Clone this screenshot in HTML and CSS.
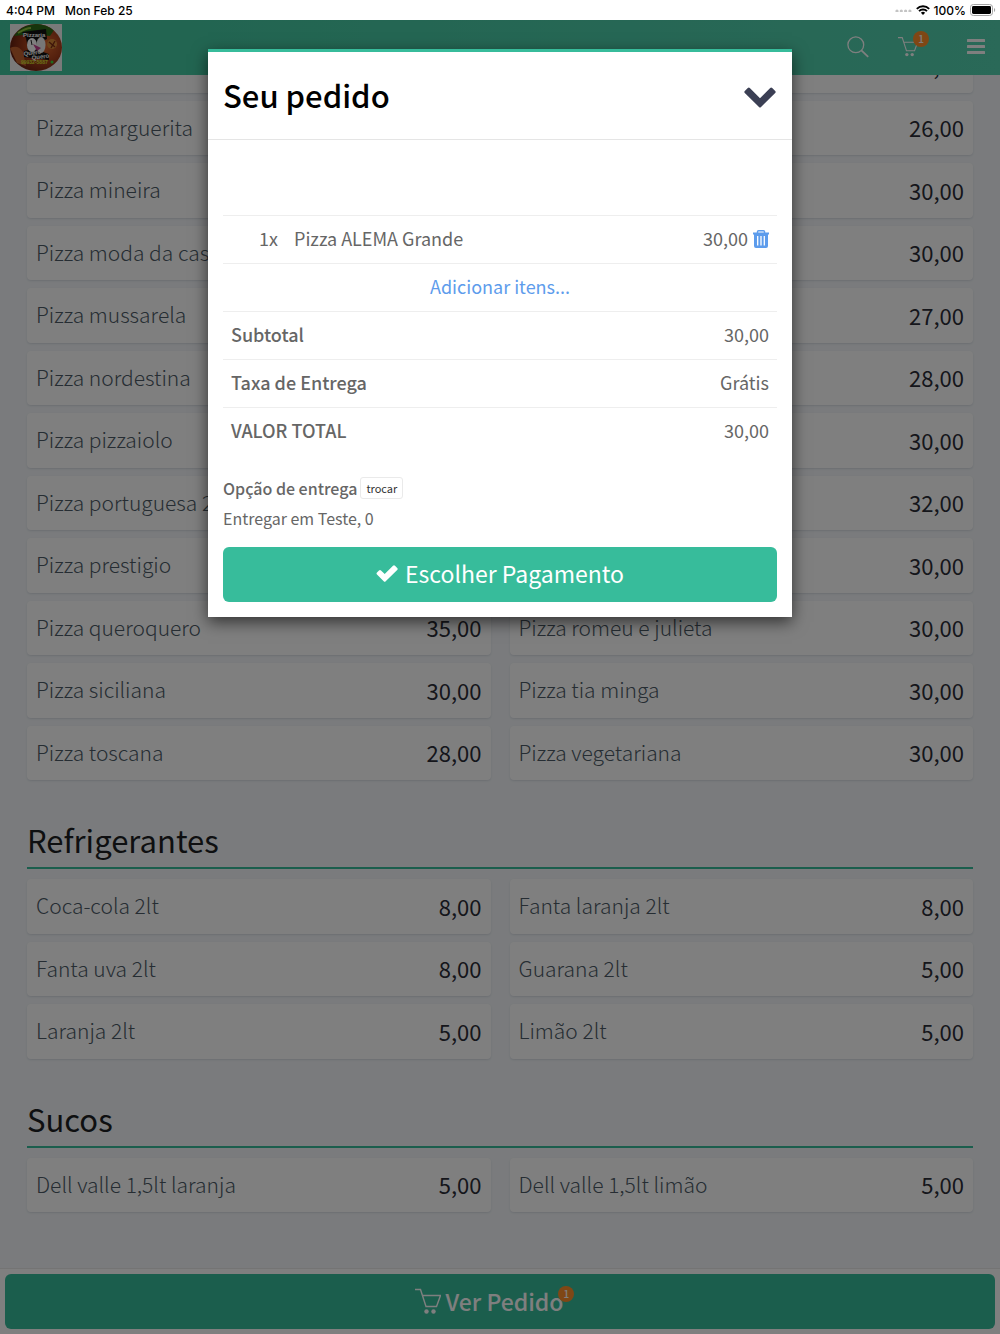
FILE: index.html
```
<!DOCTYPE html>
<html lang="pt-BR">
  <head>
    <meta charset="UTF-8" />
    <meta name="viewport" content="width=device-width, initial-scale=1.0" />
    <title>Pizzaria Quero Quero</title>
    <link rel="stylesheet" href="styles.css">
  </head>
  <body>
    <!-- icons -->
    <svg class="sprite" aria-hidden="true">
      <symbol id="cart" viewBox="0 0 26 26">
        <path d="M0 1.500h5.500l5.500 17h10.500l4-11H7.500" fill="none" stroke="currentColor" stroke-width="1.4" />
        <circle cx="11.500" cy="23.500" r="2.200" fill="currentColor" />
        <circle cx="18.500" cy="23.500" r="2.200" fill="currentColor" />
      </symbol>
    </svg>

    <div class="status-bar">
      <span class="status-group"><span>4:04 PM</span><span>Mon Feb 25</span></span>
      <span class="status-right">
        <svg width="17" height="4" viewBox="0 0 17 4" fill="#c4c4c4"><circle cx="2" cy="3" r="1.6" /><circle cx="6.3" cy="3" r="1.6" /><circle cx="10.6" cy="3" r="1.6" /><circle cx="14.9" cy="3" r="1.6" /></svg>
        <svg width="14" height="10" viewBox="0 0 14 10" fill="none" stroke="#000" stroke-width="1.9"><path d="M.8 3.8a8.8 8.8 0 0 1 12.4 0M3 6.2a5.6 5.6 0 0 1 8 0" /><path d="M7 10 4.900 7.800a3 3 0 0 1 4.200 0z" fill="#000" stroke="none" /></svg>
        <span>100%</span>
        <svg width="26" height="12" viewBox="0 0 26 12"><rect x=".5" y=".5" width="22" height="11" rx="2.8" fill="none" stroke="#a5a5a5" /><rect x="2" y="2" width="19" height="8" rx="1.4" /><path d="M24 4v4c1.600-.6 1.600-3.400 0-4z" fill="#a5a5a5" /></svg>
      </span>
    </div>

    <div class="app">
      <header class="topbar">
        <a class="logo" href="#" aria-label="Pizzaria Quero Quero">
          <svg width="52" height="47" viewBox="0 0 52 47">
            <defs>
              <radialGradient id="pizza" cx=".65" cy=".45" r=".7">
                <stop offset="0" stop-color="#e06a30" />
                <stop offset=".5" stop-color="#a8401c" />
                <stop offset="1" stop-color="#5c1a0c" />
              </radialGradient>
              <clipPath id="oval"><ellipse cx="26" cy="23.5" rx="26" ry="23.5" /></clipPath>
            </defs>
            <rect width="52" height="47" fill="#f4f4f4" />
            <g clip-path="url(#oval)">
              <rect width="52" height="47" fill="url(#pizza)" />
              <path d="M4 12Q12 0 28 0h20l-8 12-18-2z" fill="#2d6b16" />
              <path d="M8 9q8-5 13-5" stroke="#8fc23a" stroke-width="2" fill="none" />
              <path d="M0 24q8-4 13 4l3 14-9-3z" fill="#c2622f" />
              <path d="M12 8l24-3 1 10-4 2v11l6 2v6l-25-3v-6l4-1-2-12z" fill="#111" />
              <circle cx="42" cy="20" r="5" fill="#d98936" />
              <path d="M39 18l6 5M41 24l4-7" stroke="#7c2b13" stroke-width="1.4" />
              <ellipse cx="22" cy="21" rx="5" ry="7" fill="#fff" />
              <ellipse cx="31" cy="21" rx="4.500" ry="8" fill="#eee" />
              <path d="M21 16l1 5" stroke="#222" fill="none" />
              <path d="M23 20l8 4-4 3z" fill="#c33f8e" />
            </g>
            <g font-family="Liberation Sans, sans-serif" font-weight="bold">
              <text x="13" y="13" font-size="6" fill="#fff">Pizzaria</text>
              <text x="14" y="32" font-size="6" fill="#fff" transform="rotate(-8 14 32)">Quero</text>
              <text x="22" y="36" font-size="6" fill="#fff" transform="rotate(-8 22 36)">Quero</text>
              <text x="11" y="40" font-size="5" fill="#d4e02c">99932-5887</text>
            </g>
            <circle cx="42" cy="38" r="1.5" fill="#3fd43b" />
          </svg>
        </a>
        <nav class="topbar-actions">
          <button class="icon-button" aria-label="Buscar">
            <svg width="22" height="22" viewBox="0 0 22 22" fill="none" stroke="currentColor" stroke-width="1.3"><circle cx="8.8" cy="8.8" r="7.9" /><path d="M14.4 14.4l6.8 6.4" stroke-width="1.8" /></svg>
          </button>
          <button class="icon-button cart-button" aria-label="Carrinho">
            <svg width="20" height="21"><use href="#cart" /></svg>
            <span class="badge">1</span>
          </button>
          <button class="icon-button" aria-label="Menu">
            <svg width="18" height="16" viewBox="0 0 18 16" fill="currentColor"><rect y="0" width="18" height="3" rx=".5" /><rect y="6" width="18" height="3" rx=".5" /><rect y="12" width="18" height="3" rx=".5" /></svg>
          </button>
        </nav>
      </header>

      <main class="menu">
        <section class="products">
          <div class="product"><span></span></div>
          <div class="product"><span></span><b>30,00</b></div>
          <div class="product"><span>Pizza marguerita</span></div>
          <div class="product"><span></span><b>26,00</b></div>
          <div class="product"><span>Pizza mineira</span></div>
          <div class="product"><span></span><b>30,00</b></div>
          <div class="product"><span>Pizza moda da casa</span></div>
          <div class="product"><span></span><b>30,00</b></div>
          <div class="product"><span>Pizza mussarela</span></div>
          <div class="product"><span></span><b>27,00</b></div>
          <div class="product"><span>Pizza nordestina</span></div>
          <div class="product"><span></span><b>28,00</b></div>
          <div class="product"><span>Pizza pizzaiolo</span></div>
          <div class="product"><span></span><b>30,00</b></div>
          <div class="product"><span>Pizza portuguesa 2</span></div>
          <div class="product"><span></span><b>32,00</b></div>
          <div class="product"><span>Pizza prestigio</span></div>
          <div class="product"><span></span><b>30,00</b></div>
          <div class="product"><span>Pizza queroquero</span><b>35,00</b></div>
          <div class="product"><span>Pizza romeu e julieta</span><b>30,00</b></div>
          <div class="product"><span>Pizza siciliana</span><b>30,00</b></div>
          <div class="product"><span>Pizza tia minga</span><b>30,00</b></div>
          <div class="product"><span>Pizza toscana</span><b>28,00</b></div>
          <div class="product"><span>Pizza vegetariana</span><b>30,00</b></div>
        </section>

        <h2 class="category">Refrigerantes</h2>
        <section class="products">
          <div class="product"><span>Coca-cola 2lt</span><b>8,00</b></div>
          <div class="product"><span>Fanta laranja 2lt</span><b>8,00</b></div>
          <div class="product"><span>Fanta uva 2lt</span><b>8,00</b></div>
          <div class="product"><span>Guarana 2lt</span><b>5,00</b></div>
          <div class="product"><span>Laranja 2lt</span><b>5,00</b></div>
          <div class="product"><span>Limão 2lt</span><b>5,00</b></div>
        </section>

        <h2 class="category">Sucos</h2>
        <section class="products">
          <div class="product"><span>Dell valle 1,5lt laranja</span><b>5,00</b></div>
          <div class="product"><span>Dell valle 1,5lt limão</span><b>5,00</b></div>
        </section>
      </main>

      <footer class="bottom-bar">
        <button class="btn btn-order">
          <svg width="26" height="26"><use href="#cart" /></svg>
          <span class="btn-label">Ver Pedido<span class="badge">1</span></span>
        </button>
      </footer>

      <!-- modal do pedido -->
      <div class="overlay">
        <div class="modal" role="dialog" aria-labelledby="modal-title">
          <div class="modal-header">
            <h1 class="modal-title" id="modal-title">Seu pedido</h1>
            <button class="close-button" aria-label="Fechar">
              <svg width="32" height="21" viewBox="0 0 32 21" fill="#3b3f54"><path d="M16 11.2 26.2 1q1-1 2 0l3 3q1 1 0 2L17 20q-1 1-2 0L.8 6q-1-1 0-2l3-3q1-1 2 0z" /></svg>
            </button>
          </div>
          <div class="modal-body">
            <table class="order">
              <tr>
                <td class="qty">1x</td>
                <td>Pizza ALEMA Grande</td>
                <td class="value">
                  <span class="value-row">30,00
                    <button class="trash" aria-label="Remover">
                      <svg width="16" height="18" viewBox="0 0 16 18"><path d="M4.500 3V1.800q0-1 1-1h5q1 0 1 1V3" fill="none" stroke="currentColor" stroke-width="1.5" /><path d="M0 2.600h16v1.800h-1V16q0 2-2 2H3q-2 0-2-2V4.400H0z" fill="currentColor" /><path d="M4.700 6v9.500M8 6v9.500M11.300 6v9.500" stroke="#fff" stroke-width="1.3" /></svg>
                    </button>
                  </span>
                </td>
              </tr>
              <tr>
                <td colspan="3" class="add"><a href="#">Adicionar itens...</a></td>
              </tr>
              <tr>
                <th colspan="2" scope="row">Subtotal</th>
                <td class="value">30,00</td>
              </tr>
              <tr>
                <th colspan="2" scope="row">Taxa de Entrega</th>
                <td class="value">Grátis</td>
              </tr>
              <tr>
                <th colspan="2" scope="row">VALOR TOTAL</th>
                <td class="value">30,00</td>
              </tr>
            </table>
            <div class="delivery">
              <div class="delivery-title"><strong>Opção de entrega</strong><button class="btn-small">trocar</button></div>
              <div>Entregar em Teste, 0</div>
            </div>
            <button class="btn">
              <svg width="22" height="17" viewBox="0 0 22 17" fill="currentColor"><path d="M1 7.400 3 5.400q1-1 2 0l3.700 3.500L17 .8q1-1 2 0l2.200 2.100q1 1 0 2L9.700 16.200q-1 1-2 0L1 9.400q-1-1 0-2z" /></svg>
              <span>Escolher Pagamento</span>
            </button>
          </div>
        </div>
      </div>
    </div>
  </body>
</html>
```
FILE: styles.css
```
* {
  box-sizing: border-box;
}

body {
  margin: 0;
  height: 100vh;
  display: flex;
  flex-direction: column;
  overflow: hidden;
  font-family: "Noto Sans CJK SC", "Open Sans", sans-serif;
  color: #666;
}

button {
  font-family: inherit;
  border: none;
  background: none;
  padding: 0;
  cursor: pointer;
}

svg {
  display: block;
  flex: none;
}

.sprite {
  position: absolute;
  width: 0;
  height: 0;
}

/* status bar */
.status-bar {
  display: flex;
  justify-content: space-between;
  align-items: center;
  height: 20px;
  padding: 0 4px 0 6px;
  background: #fff;
  color: #000;
  font: 500 12px Inter, sans-serif;
}

.status-group {
  display: flex;
  gap: 10px;
}

.status-right {
  display: flex;
  align-items: center;
  gap: 4px;
}

/* app */
.app {
  position: relative;
  flex: 1;
  min-height: 0;
  display: flex;
  flex-direction: column;
  background: #f4f7fa;
}

.topbar {
  flex: none;
  display: flex;
  justify-content: space-between;
  align-items: center;
  height: 55px;
  padding: 0 15px 0 10px;
  background: linear-gradient(90deg, #41c9a0, #54d2b0);
  color: #fff;
}

.topbar-actions {
  display: flex;
  align-items: center;
  gap: 29px;
  padding-bottom: 2px;
}

.icon-button {
  color: #fff;
}

.cart-button {
  position: relative;
  margin-right: 20px;
}

.badge {
  position: absolute;
  top: -5px;
  right: -11px;
  width: 16px;
  height: 16px;
  border-radius: 50%;
  background: #ff8f2b;
  color: #fff;
  font-size: 10px;
  font-weight: 500;
  line-height: 15px;
  text-align: center;
}

/* produtos */
.menu {
  flex: 1;
  min-height: 0;
  overflow: hidden;
  display: flex;
  flex-direction: column;
  justify-content: flex-end;
  padding: 0 27px 56px;
}

.products {
  flex: none;
  display: grid;
  grid-template-columns: 1fr 1fr;
  gap: 8px 19px;
}

.product {
  display: flex;
  justify-content: space-between;
  align-items: center;
  padding: 11px 9px 12px;
  border-radius: 4px;
  background: #fff;
  box-shadow: 0 1px 2px rgba(60, 80, 110, 0.15);
  color: #4c5a66;
  font-size: 21px;
  font-weight: 300;
  line-height: 1.5;
}

.product span {
  min-height: 1.5em;
}

.product b {
  color: #2b2d37;
  font-size: 22px;
  font-weight: 400;
  line-height: 30px;
}

.category {
  flex: none;
  margin: 37px 0 10px;
  padding-bottom: 4px;
  border-bottom: 2px solid #37bc9b;
  color: #1c1e23;
  font-size: 31px;
  font-weight: 400;
  line-height: 46px;
}

.bottom-bar {
  flex: none;
  padding: 5px;
  border-top: 1px solid #e8e8e8;
  background: #fff;
}

.btn {
  display: flex;
  justify-content: center;
  align-items: center;
  gap: 7px;
  width: 100%;
  height: 55px;
  padding-bottom: 2px;
  border-radius: 6px;
  background: #37bc9b;
  color: #fff;
  font-size: 23px;
}

.btn-order {
  gap: 5px;
  font-weight: 500;
}

.btn-label {
  position: relative;
  margin-right: 22px;
}

.btn-label .badge {
  top: 2px;
}

/* modal */
.overlay {
  position: absolute;
  inset: 0;
  z-index: 10;
  padding-top: 29px;
  background: rgba(0, 0, 0, 0.5);
}

.modal {
  width: 584px;
  max-width: 100%;
  margin: 0 auto;
  border-top: 3px solid #37bc9b;
  background: #fff;
  box-shadow: 0 5px 15px rgba(0, 0, 0, 0.6);
}

.modal-header {
  display: flex;
  justify-content: space-between;
  align-items: center;
  height: 88px;
  padding: 3px 16px 0 15px;
  border-bottom: 1px solid #e5e5e5;
}

.modal-title {
  margin: 0;
  padding-bottom: 6px;
  color: #000;
  font-size: 31px;
  font-weight: 500;
}

.modal-body {
  padding: 75px 15px 15px;
}

.order {
  width: 100%;
  border-collapse: collapse;
  font-size: 18px;
  line-height: 27px;
}

.order td,
.order th {
  height: 48px;
  padding: 0 8px 2px;
  border-top: 1px solid #eee;
  text-align: left;
  font-weight: 400;
}

.order th {
  font-weight: 500;
}

.order .qty {
  width: 63px;
  text-align: right;
}

.order .value {
  text-align: right;
}

.value-row {
  display: flex;
  justify-content: flex-end;
  align-items: center;
  gap: 5px;
}

.trash {
  color: #5d9cec;
}

.order .add {
  text-align: center;
}

.add a {
  color: #5d9cec;
  text-decoration: none;
}

.delivery {
  padding: 17px 0 14px;
  font-size: 16px;
  line-height: 30px;
}

.delivery-title {
  display: flex;
  align-items: center;
  gap: 3px;
}

.delivery strong {
  font-weight: 500;
}

.btn-small {
  height: 22px;
  padding: 0 5px;
  border: 1px solid #eaeaea;
  border-radius: 3px;
  background: #fff;
  color: #333;
  font-size: 11px;
  line-height: 20px;
}
```
